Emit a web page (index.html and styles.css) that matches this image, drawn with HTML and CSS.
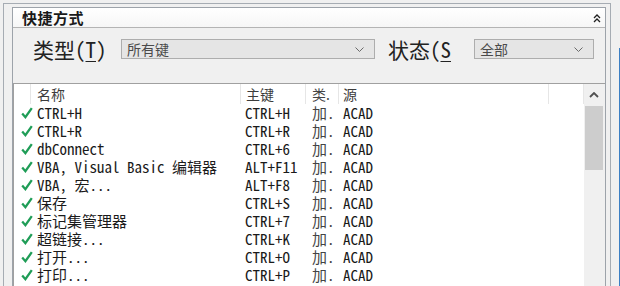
FILE: index.html
```html
<!DOCTYPE html>
<html lang="zh-CN">
<head>
    <meta charset="UTF-8">
    <meta name="viewport" content="width=device-width, initial-scale=1.0">
    <link rel="stylesheet" href="styles.css">
    <title>快捷方式</title>
</head>
<body>
    <div class="frame">
        <div class="panel">
            <div class="panel-head">
                <span class="panel-title">快捷方式</span>
                <svg class="collapse" width="8" height="9" viewBox="0 0 8 9">
                    <path d="M1 4 L4 1 L7 4 M1 8 L4 5 L7 8" fill="none" stroke="#202020" stroke-width="1.3"/>
                </svg>
            </div>
            <div class="filters">
                <label class="filter-label label-type">类型(<u>T</u>)</label>
                <div class="combo combo-type">
                    <span>所有键</span>
                    <svg width="9" height="5" viewBox="0 0 9 5"><path d="M0.5 0.5 L4.5 4.5 L8.5 0.5" fill="none" stroke="#6a6a6a"/></svg>
                </div>
                <label class="filter-label label-status">状态(<u>S</u></label>
                <div class="combo combo-status">
                    <span>全部</span>
                    <svg width="9" height="5" viewBox="0 0 9 5"><path d="M0.5 0.5 L4.5 4.5 L8.5 0.5" fill="none" stroke="#6a6a6a"/></svg>
                </div>
            </div>
            <div class="list">
                <div class="list-body">
                    <div class="list-row list-header">
                        <div class="cell cell-check"></div>
                        <div class="cell cell-name">名称</div>
                        <div class="cell cell-key">主键</div>
                        <div class="cell cell-type">类.</div>
                        <div class="cell cell-source">源</div>
                        <div class="cell"></div>
                    </div>
                    <div id="rows"></div>
                </div>
                <div class="scrollbar">
                    <div class="scroll-up">
                        <svg width="10" height="6" viewBox="0 0 10 6"><path d="M1 5 L5 1 L9 5" fill="none" stroke="#505050" stroke-width="1.8"/></svg>
                    </div>
                    <div class="scroll-thumb"></div>
                </div>
            </div>
        </div>
    </div>
    <div class="edge"></div>
    <script>
        const shortcuts = [
            ['CTRL+H', 'CTRL+H'],
            ['CTRL+R', 'CTRL+R'],
            ['dbConnect', 'CTRL+6'],
            ['VBA, Visual Basic 编辑器', 'ALT+F11'],
            ['VBA, 宏...', 'ALT+F8'],
            ['保存', 'CTRL+S'],
            ['标记集管理器', 'CTRL+7'],
            ['超链接...', 'CTRL+K'],
            ['打开...', 'CTRL+O'],
            ['打印...', 'CTRL+P']
        ];

        const check = '<svg width="12" height="12" viewBox="0 0 12 12"><path d="M1.2 6.6 L4.4 10.2 L10.8 1.2" fill="none" stroke="#1f9d57" stroke-width="2.3"/></svg>';

        document.getElementById('rows').innerHTML = shortcuts.map(function (s) {
            return `
                <div class="list-row">
                    <div class="cell cell-check">${check}</div>
                    <div class="cell cell-name">${s[0]}</div>
                    <div class="cell cell-key">${s[1]}</div>
                    <div class="cell cell-type">加.</div>
                    <div class="cell cell-source">ACAD</div>
                    <div class="cell"></div>
                </div>`;
        }).join('');
    </script>
</body>
</html>
```

FILE: styles.css
```css
body {
    margin: 0;
    height: 286px;
    overflow: hidden;
    display: flex;
    background-color: #f0f0f0;
    font-family: "Noto Sans CJK SC", sans-serif;
    color: #1a1a1a;
}

.frame {
    width: 608px;
    height: 283px;
    box-sizing: border-box;
    margin: 3px 0 0 3px;
    padding: 3px 4px 0 8px;
    border: 1px solid #a6acb3;
    border-bottom: none;
    display: flex;
}

.edge {
    flex: 1;
    margin-top: 48px;
    border-right: 1px solid #3c7fc4;
}

.panel {
    flex: 1;
    border: 1px solid #9da3aa;
    border-bottom: none;
    display: flex;
    flex-direction: column;
    overflow: hidden;
}

.panel-head {
    height: 19px;
    display: flex;
    align-items: center;
    justify-content: space-between;
    padding: 0 4px 0 9px;
    background: linear-gradient(#ffffff, #f6f6f6);
    border-bottom: 1px solid #b4b4b4;
}

.panel-title {
    font-size: 15px;
    font-weight: bold;
    line-height: 19px;
    letter-spacing: 0.5px;
}

.collapse {
    margin-top: 1px;
}

.filters {
    height: 20px;
    display: flex;
    align-items: center;
    padding: 11px 0 24px 20px;
}

.filter-label {
    font-family: "Noto Sans Mono CJK SC", "Noto Sans CJK SC", monospace;
    font-size: 21px;
    line-height: 26px;
    color: #222;
    white-space: nowrap;
}

.filter-label u {
    text-underline-offset: 3px;
    text-decoration-thickness: 1px;
}

.label-type {
    width: 88px;
}

.label-status {
    width: 67px;
    margin-left: 13px;
    margin-right: 19px;
}

.combo {
    height: 20px;
    box-sizing: border-box;
    border: 1px solid #adadad;
    background-color: #e5e5e5;
    display: flex;
    align-items: center;
    justify-content: space-between;
    padding: 0 10px 0 5px;
    font-size: 14px;
    line-height: 18px;
    color: #4a4a4a;
}

.combo-type {
    width: 254px;
}

.combo-status {
    width: 120px;
}

.list {
    flex: 1;
    min-height: 0;
    display: flex;
    border-top: 1px solid #a0a0a0;
    border-left: 1px solid #a0a0a0;
}

.list-body {
    width: 570px;
    background-color: #fff;
    overflow: hidden;
}

.list-row {
    display: grid;
    grid-template-columns: 17px 210px 65px 33px 210px 1fr;
    height: 18px;
    font-family: "Noto Sans Mono CJK SC", "Liberation Mono", monospace;
    font-size: 15px;
    line-height: 18px;
    white-space: nowrap;
}

.list-header {
    height: 20px;
    font-family: "Noto Sans CJK SC", sans-serif;
    font-size: 14px;
    line-height: 20px;
    color: #3c3c3c;
}

.list-header .cell {
    border-right: 1px solid #e6e6e6;
}

.cell-check svg {
    margin: 3px 0 0 7px;
    display: block;
}

.cell-name {
    padding-left: 6px;
}

.cell-key {
    padding-left: 4px;
}

.cell-type {
    padding-left: 6px;
    color: #444;
}

.cell-source {
    padding-left: 4px;
}

.list-header .cell-key {
    padding-left: 5px;
}

.scrollbar {
    width: 20px;
    background-color: #f0f0f0;
}

.scroll-up {
    height: 22px;
    display: flex;
    align-items: center;
    justify-content: center;
}

.scroll-thumb {
    margin-left: 1px;
    width: 18px;
    height: 64px;
    background-color: #cdcdcd;
}
```
